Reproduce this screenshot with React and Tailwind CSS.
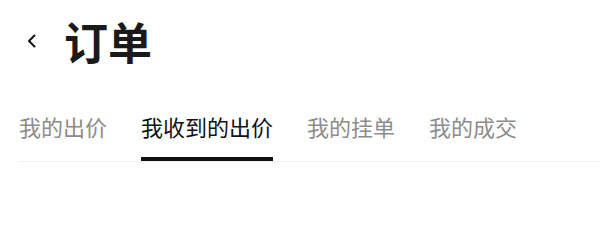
import React, { useState } from 'react'

const TABS = ['我的出价', '我收到的出价', '我的挂单', '我的成交']

const font = { fontFamily: '"Noto Sans CJK SC", "Noto Sans", sans-serif' }

export default function App() {
  const [active, setActive] = useState(1)

  return (
    <div className="w-[600px] h-[201px] bg-white overflow-hidden font-['Noto_Sans_CJK_SC',sans-serif]">

      {/* Header */}
      <div className="flex items-center pt-[19px] pl-[26px]">
        <button className="w-[10px] h-[14px] flex items-center justify-center text-[#111]">
          <svg width="9" height="14" viewBox="0 0 9 14" fill="none">
            <path d="M7.5 1.5 L2 7 L7.5 12.5" stroke="currentColor" strokeWidth="2" strokeLinecap="round" strokeLinejoin="round" />
          </svg>
        </button>
        <h1 className="ml-[28px] text-[44px] leading-[44px] font-bold text-[#1a1a1a]">订单</h1>
      </div>

      {/* Tabs */}
      <div className="mt-[52px] ml-[19px] flex gap-[34px] border-b border-[#f0f0f0]">
        {TABS.map((t, i) => (
          <button key={t} onClick={() => setActive(i)}
            className={`text-[22px] leading-[22px] pb-[20px] border-b-4 ${
              active === i
                ? 'text-[#111] border-[#111]'
                : 'text-[#8c8c8c] border-transparent'
            }`}>
            {t}
          </button>
        ))}
      </div>

    </div>
  )
}
